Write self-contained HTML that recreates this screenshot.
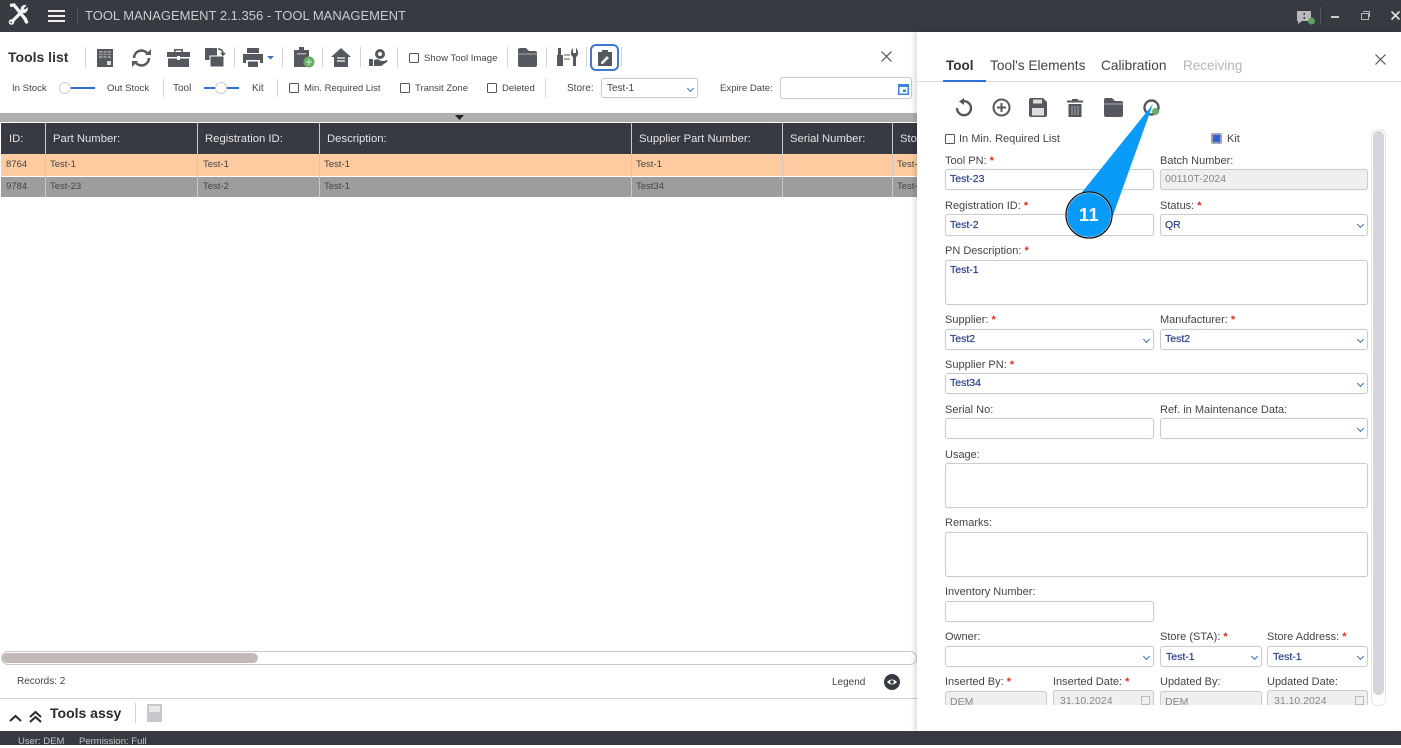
<!DOCTYPE html>
<html><head><meta charset="utf-8"><style>
html,body{margin:0;padding:0;width:1401px;height:745px;overflow:hidden;background:#fff;font-family:"Liberation Sans",sans-serif;color:#444}
.a{position:absolute}
.t{position:absolute;white-space:nowrap;font-size:10px;line-height:12px;color:#444}
.l{position:absolute;white-space:nowrap;font-size:11px;line-height:13px;color:#444;margin-top:1px}
.l b{color:#e02b20;font-weight:bold}
.i{position:absolute;box-sizing:border-box;background:#fff;border:1px solid #c9ccd1;border-radius:3px;font-size:10.5px;line-height:21px;color:#2b3f8e;padding-left:4px;white-space:nowrap;box-shadow:0 0 1px #ddd;-webkit-text-stroke:.2px currentColor}
.d{background:#efefef;color:#888;-webkit-text-stroke:0}
.sel:after{content:"";position:absolute;right:4px;top:7px;width:4px;height:4px;border-right:1.3px solid #3b6ea8;border-bottom:1.3px solid #3b6ea8;transform:rotate(45deg)}
.cb{position:absolute;box-sizing:border-box;width:10px;height:10px;border:1.3px solid #555;border-radius:1.5px;background:#fff}
.v{position:absolute;width:1px;background:#d4d4d4}
.h{position:absolute;color:#e4e4e6;font-size:11.3px;line-height:13px;white-space:nowrap;top:132px}
.c{position:absolute;font-size:9.5px;line-height:12px;white-space:nowrap;color:#444}
.s{position:absolute;width:1px;background:#c9c9cc}
svg{position:absolute;overflow:visible}
</style></head><body>

<!-- top bar -->
<div class="a" style="left:0;top:0;width:1401px;height:32px;background:#373a40"></div>
<svg style="left:8px;top:4px" width="21" height="21" viewBox="0 0 21 21" fill="none"><path d="M2 1.500L6 1L18 16" stroke="#f2f2f2" stroke-width="3.400"/><path d="M17 15L18.500 18" stroke="#f2f2f2" stroke-width="3.400" stroke-linecap="round"/><path d="M3.500 18L14 7.500" stroke="#f2f2f2" stroke-width="3.200"/><circle cx="3.500" cy="18" r="2" stroke="#f2f2f2" stroke-width="1.600"/><path d="M18.500 1.500L15.800 4.200L17 5.500L19.800 3Q20.500 7 17 9Q14 9.500 12.500 7.500Q12 3 15 1.200Q17 .5 18.500 1.500Z" fill="#f2f2f2"/></svg>
<div class="a" style="left:48px;top:10px;width:17px;height:2px;background:#eee"></div>
<div class="a" style="left:48px;top:15px;width:17px;height:2px;background:#eee"></div>
<div class="a" style="left:48px;top:20px;width:17px;height:2px;background:#eee"></div>
<div class="a" style="left:77px;top:9px;width:1px;height:14px;background:#55585e"></div>
<div class="t" style="left:85px;top:8px;font-size:13px;line-height:16px;color:#c9cbce">TOOL MANAGEMENT 2.1.356 - TOOL MANAGEMENT</div>
<svg style="left:1297px;top:10px" width="22" height="17" viewBox="0 0 22 17"><path d="M0 1h14v10H5l-4 3v-3H0z" fill="#b9b9bb"/><rect x="6.500" y="3" width="1.500" height="2" fill="#444"/><rect x="6.500" y="7" width="1.500" height="2" fill="#444"/><circle cx="14.500" cy="11" r="3.500" fill="#5da35d"/></svg>
<div class="a" style="left:1320px;top:7px;width:1px;height:17px;background:#55585e"></div>
<div class="a" style="left:1331px;top:16px;width:8px;height:2px;background:#ccc"></div>
<div class="a" style="left:1361px;top:13px;width:6px;height:5px;border:1px solid #b5b5b5"></div>
<div class="a" style="left:1363px;top:11px;width:6px;height:5px;border:1px solid #b5b5b5;border-left:0;border-bottom:0"></div>
<svg style="left:1391px;top:11px" width="9" height="9"><path d="M.5.5L8.500 8.500M8.500.5L.5 8.500" stroke="#ddd" stroke-width="1.800"/></svg>

<!-- left toolbar -->
<div class="t" style="left:8px;top:49px;font-size:14px;line-height:16px;font-weight:bold;color:#333">Tools list</div>
<div class="v" style="left:85px;top:47px;height:20px"></div>
<svg style="left:97px;top:49px" width="16" height="18"><rect width="16" height="18" fill="#55585e"/><path d="M2 2h12v7H2z" fill="#999"/><path d="M2 4.300h12M2 6.600h12M6 2v7M10 2v7" stroke="#55585e"/><rect x="10" y="12" width="4" height="4" fill="#ddd"/></svg>
<svg style="left:131px;top:48px" width="21" height="20" viewBox="0 0 21 20"><path d="M3 10A7.500 7.500 0 0 1 16 5M18 10A7.500 7.500 0 0 1 5 15" fill="none" stroke="#55585e" stroke-width="2.600"/><path d="M14 7h6V1zM7 13H1v6z" fill="#55585e"/></svg>
<svg style="left:167px;top:49px" width="23" height="18"><path d="M7 3V0h9v3h7v5H0V3z M8.500 1.500v1.500h6V1.500z M1 9.500h21V18H1z" fill="#55585e" fill-rule="evenodd"/><rect x="10" y="7" width="3" height="4" fill="#fff"/></svg>
<svg style="left:205px;top:48px" width="20" height="20"><rect x="0" y="0" width="12" height="12" fill="#55585e"/><rect x="5" y="8" width="14" height="11" fill="#55585e" stroke="#fff"/><path d="M13 1q5 0 5 5M16 5l2 2 2-2" fill="none" stroke="#55585e" stroke-width="1.600"/></svg>
<div class="v" style="left:234px;top:47px;height:20px"></div>
<svg style="left:243px;top:48px" width="36" height="19"><path d="M4 0h12v5H4z M0 6h20v9h-3v-3H3v3H0z M5 13.500h10V19H5z" fill="#55585e"/><path d="M24 8h7l-3.500 3.500z" fill="#3a70b8"/></svg>
<div class="v" style="left:282px;top:47px;height:20px"></div>
<svg style="left:294px;top:47px" width="21" height="21"><path d="M0 3h5V0h5v3h5v17H0z" fill="#55585e"/><rect x="3" y="6" width="9" height="1.500" fill="#aaa"/><circle cx="15" cy="15" r="5.500" fill="#66ad66"/><path d="M12 15h6M15 12v6" stroke="#d8edd8"/></svg>
<div class="v" style="left:322px;top:47px;height:20px"></div>
<svg style="left:331px;top:48px" width="20" height="19"><path d="M10 0L20 9h-3v10H3V9H0z" fill="#55585e"/><path d="M6 10h8M6 13h8" stroke="#fff" stroke-width="1.200"/></svg>
<div class="v" style="left:360px;top:47px;height:20px"></div>
<svg style="left:369px;top:48px" width="19" height="19"><circle cx="11" cy="6" r="5" fill="#55585e"/><circle cx="11" cy="6" r="2" fill="#fff"/><path d="M0 11h4v7H0z M5 12q4-2 7 1h3l3-1q1 1 0 2l-6 4H5z" fill="#55585e"/></svg>
<div class="v" style="left:397px;top:47px;height:20px"></div>
<div class="cb" style="left:409px;top:53px"></div>
<div class="t" style="left:424px;top:53px;color:#444;font-size:9.6px">Show Tool Image</div>
<div class="v" style="left:507px;top:47px;height:20px"></div>
<svg style="left:518px;top:48px" width="19" height="19"><path d="M0 2q0-2 2-2h6l3 3h6q2 0 2 2v12q0 2-2 2H2q-2 0-2-2z" fill="#55585e"/><path d="M0 6h19" stroke="#fff" stroke-width=".6"/></svg>
<div class="v" style="left:546px;top:47px;height:20px"></div>
<svg style="left:557px;top:48px" width="21" height="19"><path d="M1 0h3v7h2v11H0V7h1z M16 0v5h3V0q2 2 2 5t-2 4v9h-3V9q-2-1-2-4t2-5z" fill="#55585e"/><path d="M7 7h6M7 11h6" stroke="#55585e"/></svg>
<div class="v" style="left:586px;top:47px;height:20px"></div>
<div class="a" style="left:590px;top:44px;width:25px;height:23px;border:2px solid #3e78d0;border-radius:6px;box-sizing:content-box"></div>
<svg style="left:598px;top:50px" width="14" height="16"><path d="M0 2h4V0h6v2h4v14H0z" fill="#55585e"/><path d="M3 12l6-6 2 2-6 6H3z" fill="#e8e8e8"/></svg>
<div class="v" style="left:621px;top:47px;height:20px"></div>
<svg style="left:881px;top:51px" width="11" height="11"><path d="M.5.5L10.500 10.500M10.500.5L.5 10.500" stroke="#555" stroke-width="1.200"/></svg>

<!-- filters -->
<div class="t" style="left:12px;top:82px;margin-top:1px;font-size:9.6px">In Stock</div>
<div class="a" style="left:66px;top:87px;width:29px;height:2px;background:#2f6fd3"></div>
<div class="a" style="left:59px;top:82px;box-sizing:border-box;width:12px;height:12px;border-radius:50%;background:#fff;border:1px solid #ccc"></div>
<div class="t" style="left:107px;top:82px;margin-top:1px;font-size:9.6px">Out Stock</div>
<div class="v" style="left:163px;top:79px;height:18px"></div>
<div class="t" style="left:173px;top:82px;margin-top:1px">Tool</div>
<div class="a" style="left:204px;top:87px;width:35px;height:2px;background:#2f6fd3"></div>
<div class="a" style="left:215px;top:82px;box-sizing:border-box;width:12px;height:12px;border-radius:50%;background:#fff;border:1px solid #ccc"></div>
<div class="t" style="left:252px;top:82px;margin-top:1px">Kit</div>
<div class="v" style="left:277px;top:79px;height:18px"></div>
<div class="cb" style="left:289px;top:83px"></div>
<div class="t" style="left:304px;top:83px;font-size:9.5px">Min. Required List</div>
<div class="cb" style="left:400px;top:83px"></div>
<div class="t" style="left:415px;top:83px;font-size:9.5px">Transit Zone</div>
<div class="cb" style="left:487px;top:83px"></div>
<div class="t" style="left:502px;top:83px;font-size:9.5px">Deleted</div>
<div class="v" style="left:545px;top:79px;height:18px"></div>
<div class="t" style="left:567px;top:83px">Store:</div>
<div class="i sel" style="left:601px;top:78px;width:97px;height:20px;color:#444;padding-left:5px;font-size:10px;line-height:19px;-webkit-text-stroke:0">Test-1</div>
<div class="t" style="left:720px;top:83px;font-size:9.6px">Expire Date:</div>
<div class="i" style="left:780px;top:77px;width:132px;height:22px"></div>
<svg style="left:898px;top:83px" width="11" height="12"><path d="M0 1h11v11H0z" fill="#3a83d6"/><rect x="1.500" y="4" width="8" height="6.500" fill="#fff"/><rect x="5" y="6.500" width="3" height="2.500" fill="#3a83d6"/></svg>

<!-- grid -->
<div class="a" style="left:0;top:113px;width:917px;height:9px;background:#b0aeae"></div>
<svg style="left:455px;top:115px" width="9" height="5"><path d="M0 0h9L4.500 5z" fill="#222"/></svg>
<div class="a" style="left:1px;top:123px;width:916px;height:31px;background:#373a42"></div>
<div class="a" style="left:1px;top:154px;width:916px;height:22px;background:#fecba1"></div>
<div class="a" style="left:1px;top:177px;width:916px;height:20px;background:#9e9c9f"></div>
<div class="s" style="left:45px;top:123px;height:74px"></div>
<div class="s" style="left:197px;top:123px;height:74px"></div>
<div class="s" style="left:319px;top:123px;height:74px"></div>
<div class="s" style="left:631px;top:123px;height:74px"></div>
<div class="s" style="left:782px;top:123px;height:74px"></div>
<div class="s" style="left:892px;top:123px;height:74px"></div>
<div class="h" style="left:9px;top:133px">ID:</div>
<div class="h" style="left:53px;top:133px">Part Number:</div>
<div class="h" style="left:205px;top:133px">Registration ID:</div>
<div class="h" style="left:327px;top:133px">Description:</div>
<div class="h" style="left:639px;top:133px">Supplier Part Number:</div>
<div class="h" style="left:790px;top:133px">Serial Number:</div>
<div class="h" style="left:900px;top:133px">Sto</div>
<div class="c" style="left:6px;top:159px">8764</div>
<div class="c" style="left:50px;top:159px">Test-1</div>
<div class="c" style="left:203px;top:159px">Test-1</div>
<div class="c" style="left:324px;top:159px">Test-1</div>
<div class="c" style="left:636px;top:159px">Test-1</div>
<div class="c" style="left:897px;top:159px">Test-</div>
<div class="c" style="left:6px;top:181px">9784</div>
<div class="c" style="left:50px;top:181px">Test-23</div>
<div class="c" style="left:203px;top:181px">Test-2</div>
<div class="c" style="left:324px;top:181px">Test-1</div>
<div class="c" style="left:636px;top:181px">Test34</div>
<div class="c" style="left:897px;top:181px">Test-</div>

<!-- h scrollbar -->
<div class="a" style="left:1px;top:651px;width:916px;height:14px;box-sizing:border-box;border:1px solid #c8c8c8;border-radius:7px"></div>
<div class="a" style="left:2px;top:653px;width:256px;height:10px;background:#c4b9b9;border-radius:5px"></div>
<div class="t" style="left:17px;top:675px;margin-top:1px">Records: 2</div>
<div class="t" style="left:832px;top:676px;margin-top:1px">Legend</div>
<svg style="left:884px;top:674px" width="16" height="16"><circle cx="8" cy="8" r="8" fill="#373a40"/><path d="M3 8q5-5 10 0q-5 5-10 0z" fill="#fff"/><circle cx="8" cy="8" r="1.800" fill="#373a40"/></svg>
<div class="a" style="left:0;top:698px;width:917px;height:1px;background:#d0d0d0"></div>
<svg style="left:8px;top:709px" width="36" height="15" fill="none" stroke="#2a2a2a" stroke-width="2"><path d="M2 12l5.500-5 5.500 5M22 8l5.500-5 5.500 5M22 13l5.500-5 5.500 5"/></svg>
<div class="t" style="left:50px;top:705px;font-size:14px;line-height:16px;font-weight:bold;color:#2a2a2a">Tools assy</div>
<div class="v" style="left:135px;top:703px;height:20px"></div>
<svg style="left:147px;top:704px" width="15" height="18"><rect width="15" height="18" fill="#c8c8cc"/><path d="M2 2h11v6H2z" fill="#e8e8ea"/></svg>

<!-- bottom bar -->
<div class="a" style="left:0;top:731px;width:1401px;height:14px;background:#373a40"></div>
<div class="t" style="left:18px;top:736px;font-size:9.500px;color:#c5c6c9">User: DEM</div>
<div class="t" style="left:79px;top:736px;font-size:9.500px;color:#c5c6c9">Permission: Full</div>

<!-- right panel -->
<div class="a" style="left:917px;top:32px;width:484px;height:699px;background:#fff;box-shadow:-3px 0 4px rgba(0,0,0,.12)"></div>
<div class="t" style="left:946px;top:58px;font-size:13.500px;line-height:16px;font-weight:bold;color:#333">Tool</div>
<div class="t" style="left:990px;top:58px;font-size:13.700px;line-height:16px;color:#444">Tool's Elements</div>
<div class="t" style="left:1101px;top:58px;font-size:13.700px;line-height:16px;color:#444">Calibration</div>
<div class="t" style="left:1183px;top:58px;font-size:13.500px;line-height:16px;color:#b5b5b5">Receiving</div>
<div class="a" style="left:917px;top:81px;width:484px;height:1px;background:#dcdcdc"></div>
<div class="a" style="left:943px;top:80px;width:43px;height:2px;background:#2f6fd3"></div>
<svg style="left:1375px;top:54px" width="11" height="11"><path d="M.5.5L10.500 10.500M10.500.5L.5 10.500" stroke="#555" stroke-width="1.200"/></svg>

<svg style="left:955px;top:98px" width="18" height="19" fill="none"><path d="M7 3.500A7 7 0 1 1 2 10" stroke="#55585e" stroke-width="2.400"/><path d="M9 0v7L4 3.500z" fill="#55585e"/></svg>
<svg style="left:992px;top:98px" width="19" height="19" fill="none" stroke="#55585e"><circle cx="9.500" cy="9.500" r="8" stroke-width="2"/><path d="M5 9.500h9M9.500 5v9" stroke-width="2"/></svg>
<svg style="left:1029px;top:98px" width="18" height="19"><path d="M0 2q0-2 2-2h12l4 4v13q0 2-2 2H2q-2 0-2-2z" fill="#55585e"/><rect x="4" y="1.500" width="9" height="4" fill="#ddd"/><rect x="3" y="10" width="12" height="7.500" fill="#ddd"/></svg>
<svg style="left:1067px;top:98px" width="16" height="19"><path d="M5 1h6v1.500h5v2H0v-2h5z M1.500 6h13v13h-13z" fill="#55585e"/><path d="M5 8v9M8 8v9M11 8v9" stroke="#aaa"/></svg>
<svg style="left:1104px;top:98px" width="19" height="19"><path d="M0 2q0-2 2-2h6l3 3h6q2 0 2 2v12q0 2-2 2H2q-2 0-2-2z" fill="#55585e"/><path d="M0 6h19" stroke="#fff" stroke-width=".6"/></svg>
<svg style="left:1143px;top:99px" width="18" height="18" fill="none"><circle cx="8.500" cy="8.500" r="7" stroke="#55585e" stroke-width="2.400"/><circle cx="12.500" cy="12.500" r="3.500" fill="#66ad66"/></svg>

<div class="cb" style="left:945px;top:134px"></div>
<div class="l" style="left:959px;top:132px">In Min. Required List</div>
<div class="a" style="left:1211px;top:133px;width:11px;height:11px;box-sizing:border-box;background:#2f62d8;border:2px solid #9ba3b4;border-radius:2px"></div>
<div class="l" style="left:1227px;top:132px">Kit</div>

<div class="l" style="left:945px;top:154px">Tool PN: <b>*</b></div>
<div class="i" style="left:945px;top:169px;width:209px;height:21px;line-height:19px">Test-23</div>
<div class="l" style="left:1160px;top:154px">Batch Number:</div>
<div class="i d" style="left:1160px;top:169px;width:208px;height:21px;line-height:19px">00110T-2024</div>

<div class="l" style="left:945px;top:199px">Registration ID: <b>*</b></div>
<div class="i" style="left:945px;top:214px;width:209px;height:22px">Test-2</div>
<div class="l" style="left:1160px;top:199px">Status: <b>*</b></div>
<div class="i sel" style="left:1160px;top:214px;width:208px;height:22px">QR</div>

<div class="l" style="left:945px;top:244px">PN Description: <b>*</b></div>
<div class="i" style="left:945px;top:260px;width:423px;height:45px;line-height:19px">Test-1</div>

<div class="l" style="left:945px;top:313px">Supplier: <b>*</b></div>
<div class="i sel" style="left:945px;top:329px;width:209px;height:21px;line-height:19px">Test2</div>
<div class="l" style="left:1160px;top:313px">Manufacturer: <b>*</b></div>
<div class="i sel" style="left:1160px;top:329px;width:208px;height:21px;line-height:19px">Test2</div>

<div class="l" style="left:945px;top:358px">Supplier PN: <b>*</b></div>
<div class="i sel" style="left:945px;top:373px;width:423px;height:21px;line-height:19px">Test34</div>

<div class="l" style="left:945px;top:403px">Serial No:</div>
<div class="i" style="left:945px;top:418px;width:209px;height:21px"></div>
<div class="l" style="left:1160px;top:403px">Ref. in Maintenance Data:</div>
<div class="i sel" style="left:1160px;top:418px;width:208px;height:21px"></div>

<div class="l" style="left:945px;top:448px">Usage:</div>
<div class="i" style="left:945px;top:463px;width:423px;height:45px"></div>
<div class="l" style="left:945px;top:516px">Remarks:</div>
<div class="i" style="left:945px;top:532px;width:423px;height:45px"></div>
<div class="l" style="left:945px;top:585px">Inventory Number:</div>
<div class="i" style="left:945px;top:601px;width:209px;height:21px"></div>

<div class="l" style="left:945px;top:630px">Owner:</div>
<div class="i sel" style="left:945px;top:646px;width:209px;height:21px"></div>
<div class="l" style="left:1160px;top:630px">Store (STA): <b>*</b></div>
<div class="i sel" style="left:1160px;top:646px;width:102px;height:21px;padding-left:5px">Test-1</div>
<div class="l" style="left:1267px;top:630px">Store Address: <b>*</b></div>
<div class="i sel" style="left:1267px;top:646px;width:101px;height:21px;padding-left:5px">Test-1</div>

<div class="l" style="left:945px;top:675px">Inserted By: <b>*</b></div>
<div class="l" style="left:1053px;top:675px">Inserted Date: <b>*</b></div>
<div class="l" style="left:1160px;top:675px">Updated By:</div>
<div class="l" style="left:1267px;top:675px">Updated Date:</div>
<div class="a" style="left:940px;top:690px;width:430px;height:15px;overflow:hidden">
<div class="i d" style="left:5px;top:1px;width:102px;height:22px">DEM</div>
<div class="i d" style="left:113px;top:0;width:101px;height:22px;padding-left:6px">31.10.2024</div>
<div class="i d" style="left:220px;top:1px;width:102px;height:22px">DEM</div>
<div class="i d" style="left:327px;top:0;width:101px;height:22px;padding-left:6px">31.10.2024</div>
</div>
<svg style="left:1141px;top:695px" width="10" height="10"><rect x=".5" y="1.500" width="8" height="8" fill="none" stroke="#bbb"/></svg>
<svg style="left:1355px;top:695px" width="10" height="10"><rect x=".5" y="1.500" width="8" height="8" fill="none" stroke="#bbb"/></svg>

<!-- right scrollbar -->
<div class="a" style="left:1371px;top:129px;width:15px;height:577px;box-sizing:border-box;border:1px solid #e6e6e6;border-radius:6px"></div>
<div class="a" style="left:1373px;top:131px;width:11px;height:564px;background:#d6d6da;border-radius:5px"></div>

<!-- callout -->
<svg style="left:0;top:0" width="1401" height="745"><path d="M1153 104L1079 196L1112 218z" fill="#0a9bf8"/><circle cx="1089" cy="215" r="22.500" fill="#0a9bf8" stroke="#fff" stroke-width="1"/><circle cx="1089" cy="215" r="23" fill="none" stroke="#111" stroke-width="1.300"/></svg>
<div class="t" style="left:1069px;top:205px;width:40px;text-align:center;font-size:18px;line-height:21px;font-weight:bold;color:#fff;letter-spacing:.5px">11</div>

</body></html>
